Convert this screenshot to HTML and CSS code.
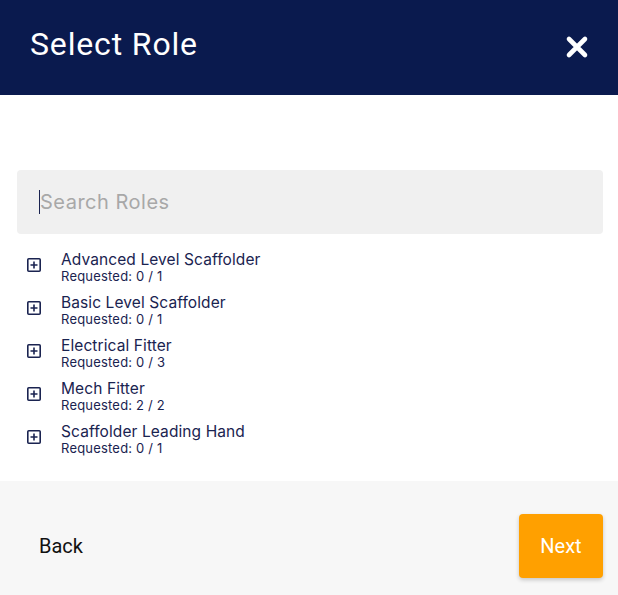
FILE: index.html
```html
<!DOCTYPE html>
<html>
<head>
<meta charset="utf-8">
<link rel="stylesheet" href="styles.css">
</head>
<body>
<div class="modal">
  <header class="header">
    <h1 class="title">Select Role</h1>
    <button class="close" aria-label="Close">
      <svg width="24" height="24" viewBox="0 0 24 24"><path d="M4 4L20 20M20 4L4 20" stroke="#fff" stroke-width="4.6" stroke-linecap="round"/></svg>
    </button>
  </header>
  <main class="body">
    <div class="search">
      <span class="caret"></span>
      <span class="placeholder">Search Roles</span>
    </div>
    <ul class="roles">
      <li class="role">
        <svg class="plus" width="14" height="14" viewBox="0 0 14 14"><rect x="0.8" y="0.8" width="12.4" height="12.4" rx="1" fill="none" stroke="#1a2350" stroke-width="1.6"/><path d="M7 3.5V10.5M3.5 7H10.5" stroke="#1a2350" stroke-width="1.6"/></svg>
        <div class="role-text"><div class="role-name">Advanced Level Scaffolder</div><div class="role-req">Requested: 0 / 1</div></div>
      </li>
      <li class="role">
        <svg class="plus" width="14" height="14" viewBox="0 0 14 14"><rect x="0.8" y="0.8" width="12.4" height="12.4" rx="1" fill="none" stroke="#1a2350" stroke-width="1.6"/><path d="M7 3.5V10.5M3.5 7H10.5" stroke="#1a2350" stroke-width="1.6"/></svg>
        <div class="role-text"><div class="role-name">Basic Level Scaffolder</div><div class="role-req">Requested: 0 / 1</div></div>
      </li>
      <li class="role">
        <svg class="plus" width="14" height="14" viewBox="0 0 14 14"><rect x="0.8" y="0.8" width="12.4" height="12.4" rx="1" fill="none" stroke="#1a2350" stroke-width="1.6"/><path d="M7 3.5V10.5M3.5 7H10.5" stroke="#1a2350" stroke-width="1.6"/></svg>
        <div class="role-text"><div class="role-name">Electrical Fitter</div><div class="role-req">Requested: 0 / 3</div></div>
      </li>
      <li class="role">
        <svg class="plus" width="14" height="14" viewBox="0 0 14 14"><rect x="0.8" y="0.8" width="12.4" height="12.4" rx="1" fill="none" stroke="#1a2350" stroke-width="1.6"/><path d="M7 3.5V10.5M3.5 7H10.5" stroke="#1a2350" stroke-width="1.6"/></svg>
        <div class="role-text"><div class="role-name">Mech Fitter</div><div class="role-req">Requested: 2 / 2</div></div>
      </li>
      <li class="role">
        <svg class="plus" width="14" height="14" viewBox="0 0 14 14"><rect x="0.8" y="0.8" width="12.4" height="12.4" rx="1" fill="none" stroke="#1a2350" stroke-width="1.6"/><path d="M7 3.5V10.5M3.5 7H10.5" stroke="#1a2350" stroke-width="1.6"/></svg>
        <div class="role-text"><div class="role-name">Scaffolder Leading Hand</div><div class="role-req">Requested: 0 / 1</div></div>
      </li>
    </ul>
  </main>
  <footer class="footer">
    <button class="back">Back</button>
    <button class="next">Next</button>
  </footer>
</div>
</body>
</html>
```
FILE: styles.css
```css
* { box-sizing: border-box; }
html, body { margin: 0; padding: 0; background: #fff; }
body { width: 618px; height: 595px; overflow: hidden; font-family: Roboto, "Liberation Sans", sans-serif; }
.modal { display: flex; flex-direction: column; height: 595px; }
.header {
  height: 95px; background: #0a1a4e; display: flex; align-items: center;
  justify-content: space-between; padding: 0 29px 8px 30px;
}
.title { margin: 0; color: #fff; font-size: 32px; font-weight: 400; letter-spacing: 0.85px; }
.close { background: none; border: 0; padding: 0; display: flex; margin-top: 6px; }
.body { flex: 1; padding: 75px 15px 0 17px; }
.search {
  height: 64px; background: #f0f0f0; border-radius: 4px; display: flex; align-items: center;
  padding-left: 22px;
}
.caret { width: 1px; height: 24px; background: #1a2350; }
.placeholder { font-family: Inter, "Noto Sans", sans-serif; font-size: 20px; color: #a8a8a8; letter-spacing: 0.5px; }
.roles { list-style: none; margin: 17px 0 0 0; padding: 0; }
.role { display: flex; align-items: flex-start; height: 43px; padding-left: 10px; }
.plus { margin-top: 7px; flex: none; }
.role-text { margin-left: 20px; color: #1a2350; font-family: Inter, "Noto Sans", sans-serif; }
.role-name { font-size: 15.5px; line-height: 18px; letter-spacing: 0.1px; }
.role-req { font-size: 13px; line-height: 15px; letter-spacing: 0.2px; }
.footer {
  height: 114px; background: #f7f7f7; display: flex; align-items: center;
  justify-content: space-between; padding: 16px 15px 0 39px;
}
.back { background: none; border: 0; padding: 0; font-family: Roboto, sans-serif; font-size: 20px; color: #111; }
.next {
  width: 84px; height: 64px; border: 0; border-radius: 4px; background: #ffa000; color: #fff;
  font-family: Roboto, sans-serif; font-size: 20px; box-shadow: 0 2px 4px rgba(0,0,0,0.2);
}
```
